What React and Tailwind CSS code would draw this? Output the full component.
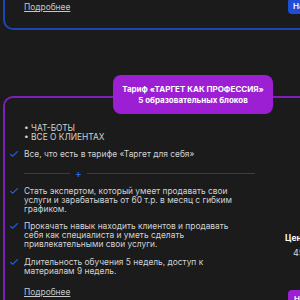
import React from 'react';

const Check = () => (
  <svg width="8" height="6" viewBox="0 0 8 6" className="mt-[1px] mr-[6px] shrink-0">
    <path d="M0.6 3.4 L2.8 5.2 L7.4 0.6" fill="none" stroke="#2260e0" strokeWidth="1.2" strokeLinecap="round" strokeLinejoin="round" />
  </svg>
);

const CheckItem = ({ children, className = '' }) => (
  <div className={`flex items-start ml-[-14px] ${className}`}>
    <Check />
    <div className="whitespace-nowrap">{children}</div>
  </div>
);

export default function App() {
  return (
    <div className="w-[300px] h-[300px] overflow-hidden bg-[#1b1b1b] font-['Inter',sans-serif] text-[8.4px] leading-[9px] text-[#d2d2d2]">
      <div className="w-[420px] pl-[3px]">
        {/* previous tariff card, mostly scrolled off */}
        <div className="-mt-[40px] h-[70px] border-2 border-[#1a45b2] rounded-[10px] flex">
          <div className="w-[280px] pl-[19px] flex items-end pb-[16px]">
            <a className="underline text-[#c6c6c6]">Подробнее</a>
          </div>
          <div className="flex items-end pb-[14px]">
            <button className="ml-[3px] h-[16px] px-[5px] rounded-[4px] bg-[#1d4fd6] text-white text-[8px] font-semibold">
              Начать обучение
            </button>
          </div>
        </div>

        {/* tariff card */}
        <div className="relative mt-[66px] border-2 border-[#7d1fb8] rounded-[10px] flex">
          <div className="absolute left-[108px] -top-[23px] w-[160px] h-[39px] rounded-[8px] bg-[#9c1fd3] flex flex-col items-center justify-center text-white font-bold text-[8px] leading-[11px]">
            <span>Тариф «ТАРГЕТ КАК ПРОФЕССИЯ»</span>
            <span>5 образовательных блоков</span>
          </div>

          <div className="w-[280px] pl-[19px] pt-[26px] pb-[20px]">
            <div className="whitespace-nowrap">• ЧАТ-БОТЫ</div>
            <div className="whitespace-nowrap">• ВСЕ О КЛИЕНТАХ</div>

            <CheckItem className="mt-[8px]">Все, что есть в тарифе «Таргет для себя»</CheckItem>

            <div className="h-[28px] flex items-center">
              <div className="w-[46px] h-[1px] bg-[#1c3c8c]"></div>
              <span className="mx-[5px] text-[#2563eb] text-[10px] leading-[10px] font-semibold">+</span>
              <div className="w-[168px] h-[1px] bg-[#1c3c8c]"></div>
            </div>

            <CheckItem>
              Стать экспертом, который умеет продавать свои<br />
              услуги и зарабатывать от 60 т.р. в месяц с гибким<br />
              графиком.
            </CheckItem>
            <CheckItem className="mt-[8px]">
              Прокачать навык находить клиентов и продавать<br />
              себя как специалиста и уметь сделать<br />
              привлекательными свои услуги.
            </CheckItem>
            <CheckItem className="mt-[9px]">
              Длительность обучения 5 недель, доступ к<br />
              материалам 9 недель.
            </CheckItem>

            <a className="block mt-[12px] underline text-[#c6c6c6]">Подробнее</a>
          </div>

          <div className="pt-[136px] whitespace-nowrap">
            <div className="font-bold text-white">Цена:</div>
            <div className="mt-[5px] ml-[8px] text-[9px] text-[#d8d8d8]">45 000 ₽</div>
            <button className="mt-[33px] ml-[3px] h-[18px] px-[6px] rounded-[4px] bg-[#9c1fd3] text-white text-[8px] font-semibold">
              Начать обучение
            </button>
          </div>
        </div>
      </div>
    </div>
  );
}
